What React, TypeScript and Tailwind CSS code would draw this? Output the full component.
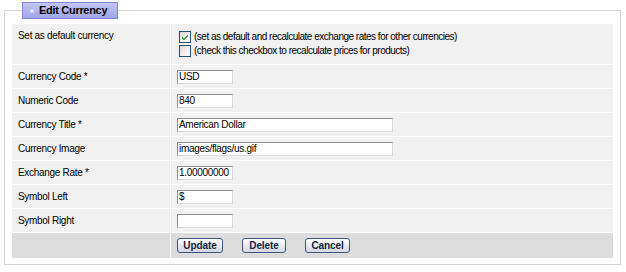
import React from 'react';

const FONT = { fontFamily: '"Liberation Sans", Arial, sans-serif' };

function Check({ checked }: { checked?: boolean }) {
  return (
    <span className="inline-flex w-[12px] h-[12px] border border-[#1c5180] bg-gradient-to-br from-[#dcdcd7] to-white items-center justify-center shrink-0">
      {checked && (
        <svg width="8" height="8" viewBox="0 0 8 8">
          <path d="M1 3.5 L3 5.5 L7 1.5 L7 3.5 L3 7.2 L1 5.2 Z" fill="#21a121" />
        </svg>
      )}
    </span>
  );
}

function TextBox({ value, wide }: { value: string; wide?: boolean }) {
  return (
    <div
      className={`h-[14px] ${wide ? 'w-[216px]' : 'w-[56px]'} bg-white border border-t-[#8c8c8c] border-l-[#8c8c8c] border-r-[#d8d8d8] border-b-[#d8d8d8] pl-[1px] text-[10px] leading-[12px] text-black tracking-[-0.3px] overflow-hidden whitespace-nowrap`}
    >
      {value}
    </div>
  );
}

function Row({ label, children, tall }: { label: string; children: React.ReactNode; tall?: boolean }) {
  return (
    <div className={`flex gap-px ${tall ? 'h-[40px]' : 'h-[23px]'}`}>
      <div className={`w-[158px] bg-[#f1f1f1] pl-[6px] flex ${tall ? 'items-start pt-[6px]' : 'items-center'}`}>
        {label}
      </div>
      <div className={`flex-1 bg-[#f1f1f1] pl-[6px] flex ${tall ? 'flex-col justify-start pt-[7px] gap-[2px]' : 'items-center'}`}>
        {children}
      </div>
    </div>
  );
}

function Btn({ label, w }: { label: string; w: string }) {
  return (
    <button
      className={`${w} h-[15px] rounded-[3px] border border-[#3d5585] bg-gradient-to-b from-white to-[#d6d6dc] text-[10px] font-bold text-[#0f1f44] leading-[13px] tracking-[-0.1px] flex items-center justify-center`}
    >
      {label}
    </button>
  );
}

export default function App() {
  return (
    <div className="w-[626px] h-[272px] bg-white pl-[4px] pt-[2px]" style={FONT}>
      <fieldset className="w-[617px] border border-[#d6d6d6] px-[7px] pb-[6px] pt-[5px]">
        <legend className="ml-[10px] h-[17px] w-[96px] border border-[#8188d6] bg-gradient-to-b from-[#c3c7f5] to-[#a0a6ea] flex items-center pl-[7px] gap-[5px]">
          <span className="w-[4px] h-[4px] bg-[#eef0ff] border border-[#c8ccf4] shrink-0" />
          <span className="text-[11px] font-bold text-black tracking-[-0.3px]">Edit Currency</span>
        </legend>
        <div className="flex flex-col gap-px bg-white text-[10px] leading-[12px] text-black tracking-[-0.3px]">
          <Row label="Set as default currency" tall>
            <div className="flex items-center gap-[3px] pl-[2px] tracking-[-0.5px]">
              <Check checked />
              <span>(set as default and recalculate exchange rates for other currencies)</span>
            </div>
            <div className="flex items-center gap-[3px] pl-[2px] tracking-[-0.5px]">
              <Check />
              <span>(check this checkbox to recalculate prices for products)</span>
            </div>
          </Row>
          <Row label="Currency Code *"><TextBox value="USD" /></Row>
          <Row label="Numeric Code"><TextBox value="840" /></Row>
          <Row label="Currency Title *"><TextBox value="American Dollar" wide /></Row>
          <Row label="Currency Image"><TextBox value="images/flags/us.gif" wide /></Row>
          <Row label="Exchange Rate *"><TextBox value="1.00000000" /></Row>
          <Row label="Symbol Left"><TextBox value="$" /></Row>
          <Row label="Symbol Right"><TextBox value="" /></Row>
          <div className="flex gap-px h-[25px]">
            <div className="w-[158px] bg-[#dcdcdc]" />
            <div className="flex-1 bg-[#dcdcdc] pl-[6px] flex items-center gap-[19px]">
              <Btn label="Update" w="w-[46px]" />
              <Btn label="Delete" w="w-[44px]" />
              <Btn label="Cancel" w="w-[45px]" />
            </div>
          </div>
        </div>
      </fieldset>
    </div>
  );
}
